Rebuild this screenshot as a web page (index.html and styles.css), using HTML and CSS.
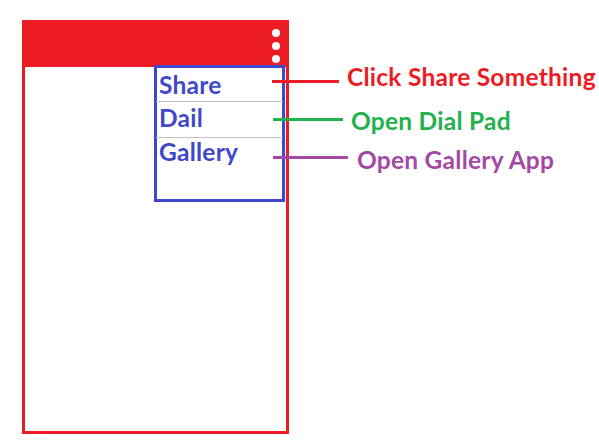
FILE: index.html
```html
<!DOCTYPE html>
<html lang="en">
<head>
<meta charset="utf-8">
<title>Options menu diagram</title>
<link rel="stylesheet" href="styles.css">
</head>
<body>
<div class="canvas">
  <div class="phone">
    <div class="appbar">
      <div class="dots">
        <span class="dot"></span>
        <span class="dot"></span>
        <span class="dot"></span>
      </div>
    </div>
  </div>

  <ul class="menu">
    <li class="item item-share">Share</li>
    <li class="item item-dail">Dail</li>
    <li class="item item-gallery">Gallery</li>
  </ul>

  <span class="pointer pointer-red"></span>
  <span class="pointer pointer-green"></span>
  <span class="pointer pointer-purple"></span>

  <span class="label label-red">Click Share Something</span>
  <span class="label label-green">Open Dial Pad</span>
  <span class="label label-purple">Open Gallery App</span>
</div>
</body>
</html>
```

FILE: styles.css
```css
* { box-sizing: border-box; }

html, body {
  margin: 0;
  padding: 0;
  background: #ffffff;
}

.canvas {
  position: relative;
  width: 599px;
  height: 442px;
  padding: 20px 0 0 22px;
  font-family: Lato, "Open Sans", "Liberation Sans", sans-serif;
  font-weight: 700;
  letter-spacing: 0.25px;
}

.phone {
  width: 267px;
  height: 414px;
  border: 3px solid #ed1c24;
  background: #ffffff;
}

.appbar {
  height: 44px;
  background: #ed1c24;
  display: flex;
  justify-content: flex-end;
  padding: 6px 6px 0 0;
}

.dots {
  display: flex;
  flex-direction: column;
  gap: 5px;
}

.dot {
  width: 8px;
  height: 8px;
  border-radius: 50%;
  background: #ffffff;
}

.menu {
  position: absolute;
  left: 154px;
  top: 65px;
  width: 131px;
  height: 137px;
  margin: 0;
  padding: 0;
  list-style: none;
  border: 3px solid #3f48cc;
  background: #ffffff;
  color: #3f48cc;
  font-size: 24.5px;
}

.item {
  padding-left: 3px;
  margin-left: -1px;
  margin-right: -1px;
}

.item-share {
  height: 34px;
  padding-top: 1px;
  line-height: 32px;
  border-bottom: 1px solid #c3c3c3;
}

.item-dail {
  height: 36px;
  line-height: 32px;
  border-bottom: 1px solid #c3c3c3;
}

.item-gallery {
  line-height: 27px;
}

.pointer {
  position: absolute;
  height: 3px;
}

.pointer-red {
  left: 272px;
  top: 80px;
  width: 67px;
  background: #ed1c24;
}

.pointer-green {
  left: 273px;
  top: 118px;
  width: 70px;
  background: #22b14c;
}

.pointer-purple {
  left: 273px;
  top: 156px;
  width: 75px;
  background: #a349a4;
}

.label {
  position: absolute;
  font-size: 24.5px;
  line-height: 30px;
  white-space: nowrap;
}

.label-red {
  left: 347px;
  top: 62px;
  color: #ed1c24;
}

.label-green {
  left: 351px;
  top: 106px;
  color: #22b14c;
}

.label-purple {
  left: 357px;
  top: 145px;
  color: #a349a4;
}
```
